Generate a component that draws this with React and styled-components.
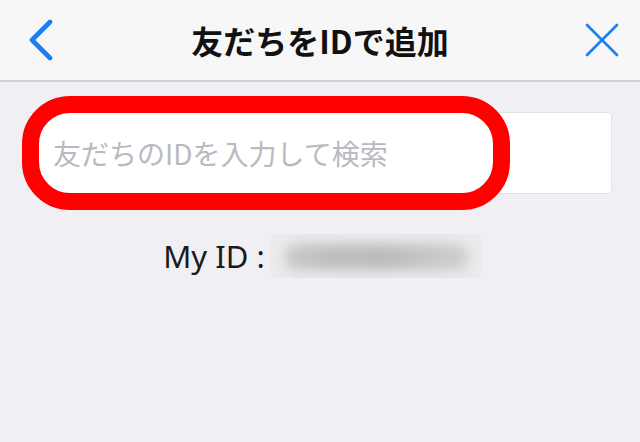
import React from 'react';
import styled, { createGlobalStyle } from 'styled-components';

const GlobalStyle = createGlobalStyle`
    html, body {
        margin: 0;
        padding: 0;
        height: 100%;
        background: #efeff4;
    }
    #root {
        min-height: 100%;
    }
`;

/* ------------------------------------------------------------------------------- */
/* Page + nav bar */

const Page = styled.div`
    width: 640px;
    height: 442px;
    background: #efeff4;
    font-family: 'Noto Sans CJK JP', 'Noto Sans', sans-serif;
    overflow: hidden;
`;

const NavBar = styled.header`
    height: 80px;
    background: #f7f7f7;
    border-bottom: 2px solid #d2d2d4;
    display: grid;
    grid-template-columns: 80px 1fr 80px;
    align-items: center;
`;

const NavButton = styled.button`
    background: transparent;
    border: none;
    padding: 0;
    height: 80px;
    display: flex;
    align-items: center;
    justify-content: ${({ $side }) => ($side === 'right' ? 'flex-end' : 'flex-start')};
    padding-left: ${({ $side }) => ($side === 'right' ? '0' : '28px')};
    padding-right: ${({ $side }) => ($side === 'right' ? '21px' : '0')};
    cursor: pointer;
`;

const Title = styled.h1`
    margin: 0;
    text-align: center;
    font-size: 32px;
    font-weight: 700;
    color: #111;
    line-height: 1;
`;

/* ------------------------------------------------------------------------------- */
/* Search field */

const Body = styled.main`
    padding: 30px 28px 0 28px;
`;

const FieldWrap = styled.div`
    position: relative;
`;

const SearchInput = styled.input`
    box-sizing: border-box;
    width: 100%;
    height: 82px;
    border: 1px solid #e2e2e6;
    border-radius: 4px;
    background: #fff;
    padding: 0 0 0 24px;
    font-family: 'Noto Sans CJK JP', 'Noto Sans', sans-serif;
    font-size: 28px;
    color: #222;
    outline: none;

    &::placeholder {
        color: #b9b9c1;
    }
`;

/* red marker drawn on top of the screenshot */
const Highlight = styled.div`
    position: absolute;
    left: -6px;
    top: -16px;
    width: 488px;
    height: 114px;
    box-sizing: border-box;
    border: 17px solid #ff0000;
    border-radius: 48px;
    pointer-events: none;
`;

/* ------------------------------------------------------------------------------- */
/* My ID row */

const MyIdRow = styled.div`
    margin-top: 40px;
    display: flex;
    align-items: center;
    justify-content: center;
    padding-left: 4px;
`;

const MyIdLabel = styled.span`
    font-family: 'Noto Sans', sans-serif;
    font-size: 31px;
    color: #1a1a1a;
    white-space: nowrap;
    margin-right: 6px;
    line-height: 1;
`;

const Blurred = styled.div`
    position: relative;
    width: 210px;
    height: 44px;
    background: #ebebed;
    overflow: hidden;

    &::before {
        content: '';
        position: absolute;
        left: 14px;
        right: 12px;
        top: 10px;
        bottom: 8px;
        border-radius: 12px;
        background: linear-gradient(90deg, #c9c9cb 0%, #bdbdbf 25%, #bbbbbd 55%, #c6c6c8 80%, #d0d0d2 100%);
        filter: blur(6px);
    }
`;

const BackIcon = () => (
    <svg width="26" height="42" viewBox="0 0 26 42" fill="none">
        <polyline points="22,3 4,21 22,39" stroke="#1b7ef3" strokeWidth="4.6" strokeLinecap="round" strokeLinejoin="round" />
    </svg>
);

const CloseIcon = () => (
    <svg width="34" height="34" viewBox="0 0 34 34" fill="none">
        <path d="M2 2 L32 32 M32 2 L2 32" stroke="#1b7ef3" strokeWidth="2.6" strokeLinecap="round" />
    </svg>
);

export default function App() {
    return (
        <>
            <GlobalStyle />
            <Page>
                <NavBar>
                    <NavButton $side="left" aria-label="back"><BackIcon /></NavButton>
                    <Title>友だちをIDで追加</Title>
                    <NavButton $side="right" aria-label="close"><CloseIcon /></NavButton>
                </NavBar>
                <Body>
                    <FieldWrap>
                        <SearchInput placeholder="友だちのIDを入力して検索" />
                        <Highlight />
                    </FieldWrap>
                    <MyIdRow>
                        <MyIdLabel>My ID :</MyIdLabel>
                        <Blurred />
                    </MyIdRow>
                </Body>
            </Page>
        </>
    );
}
